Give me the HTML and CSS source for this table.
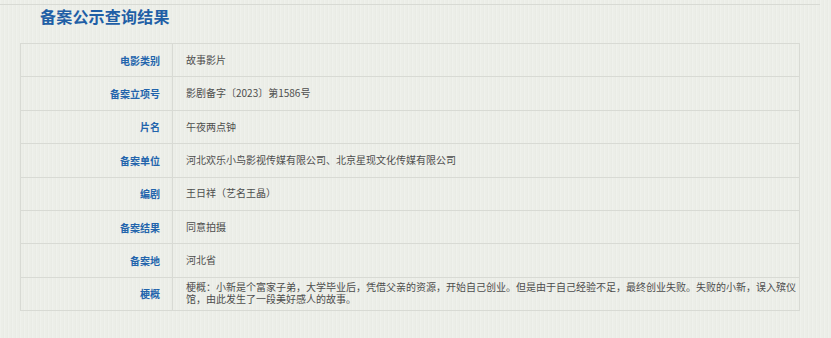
FILE: index.html
```html
<!DOCTYPE html>
<html lang="zh-CN">
<head>
<meta charset="utf-8">
<title>备案公示查询结果</title>
<link rel="stylesheet" href="styles.css">
</head>
<body>
<div class="page">
  <div class="head">
    <h1 class="title">备案公示查询结果</h1>
  </div>
  <table class="result">
    <tbody>
      <tr><th>电影类别</th><td>故事影片</td></tr>
      <tr><th>备案立项号</th><td>影剧备字〔2023〕第1586号</td></tr>
      <tr><th>片名</th><td>午夜两点钟</td></tr>
      <tr><th>备案单位</th><td>河北欢乐小鸟影视传媒有限公司、北京星现文化传媒有限公司</td></tr>
      <tr><th>编剧</th><td>王日祥（艺名王晶）</td></tr>
      <tr><th>备案结果</th><td>同意拍摄</td></tr>
      <tr><th>备案地</th><td>河北省</td></tr>
      <tr class="tall"><th>梗概</th><td>梗概：小新是个富家子弟，大学毕业后，凭借父亲的资源，开始自己创业。但是由于自己经验不足，最终创业失败。失败的小新，误入殡仪馆，由此发生了一段美好感人的故事。</td></tr>
    </tbody>
  </table>
</div>
</body>
</html>
```
FILE: styles.css
```css
html, body {
  margin: 0;
  padding: 0;
}
body {
  background-color: #eceee8;
  background-image: repeating-linear-gradient(90deg, rgba(255,255,255,0.18) 0, rgba(255,255,255,0.18) 1px, rgba(0,0,0,0) 1px, rgba(0,0,0,0) 3px, rgba(0,0,0,0.012) 3px, rgba(0,0,0,0.012) 4px);
  font-family: "Noto Sans CJK SC", "Noto Sans", sans-serif;
  width: 831px;
  height: 338px;
  overflow: hidden;
}
.page {
  padding-top: 4px;
}
.head {
  width: 820px;
  border-top: 1px solid #d8dad4;
  padding-left: 40px;
  box-sizing: border-box;
}
.title {
  margin: 0;
  font-size: 16px;
  line-height: 22px;
  font-weight: bold;
  color: #1f5fa6;
  letter-spacing: 0.2px;
}
.result {
  margin: 16px 0 0 20px;
  width: 780px;
  border-collapse: collapse;
  font-size: 10px;
}
.result tr {
  height: 33.4px;
}
.result th, .result td {
  border: 1px solid #d8dad4;
  padding: 0;
  vertical-align: middle;
}
.result th {
  width: 139px;
  padding-right: 12px;
  text-align: right;
  color: #2264ac;
  font-weight: bold;
}
.result td {
  padding-left: 13px;
  padding-right: 2px;
  color: #4d4d4d;
  line-height: 12.7px;
}
.result tr.tall td {
  padding-top: 3px;
  padding-bottom: 4px;
}
```
